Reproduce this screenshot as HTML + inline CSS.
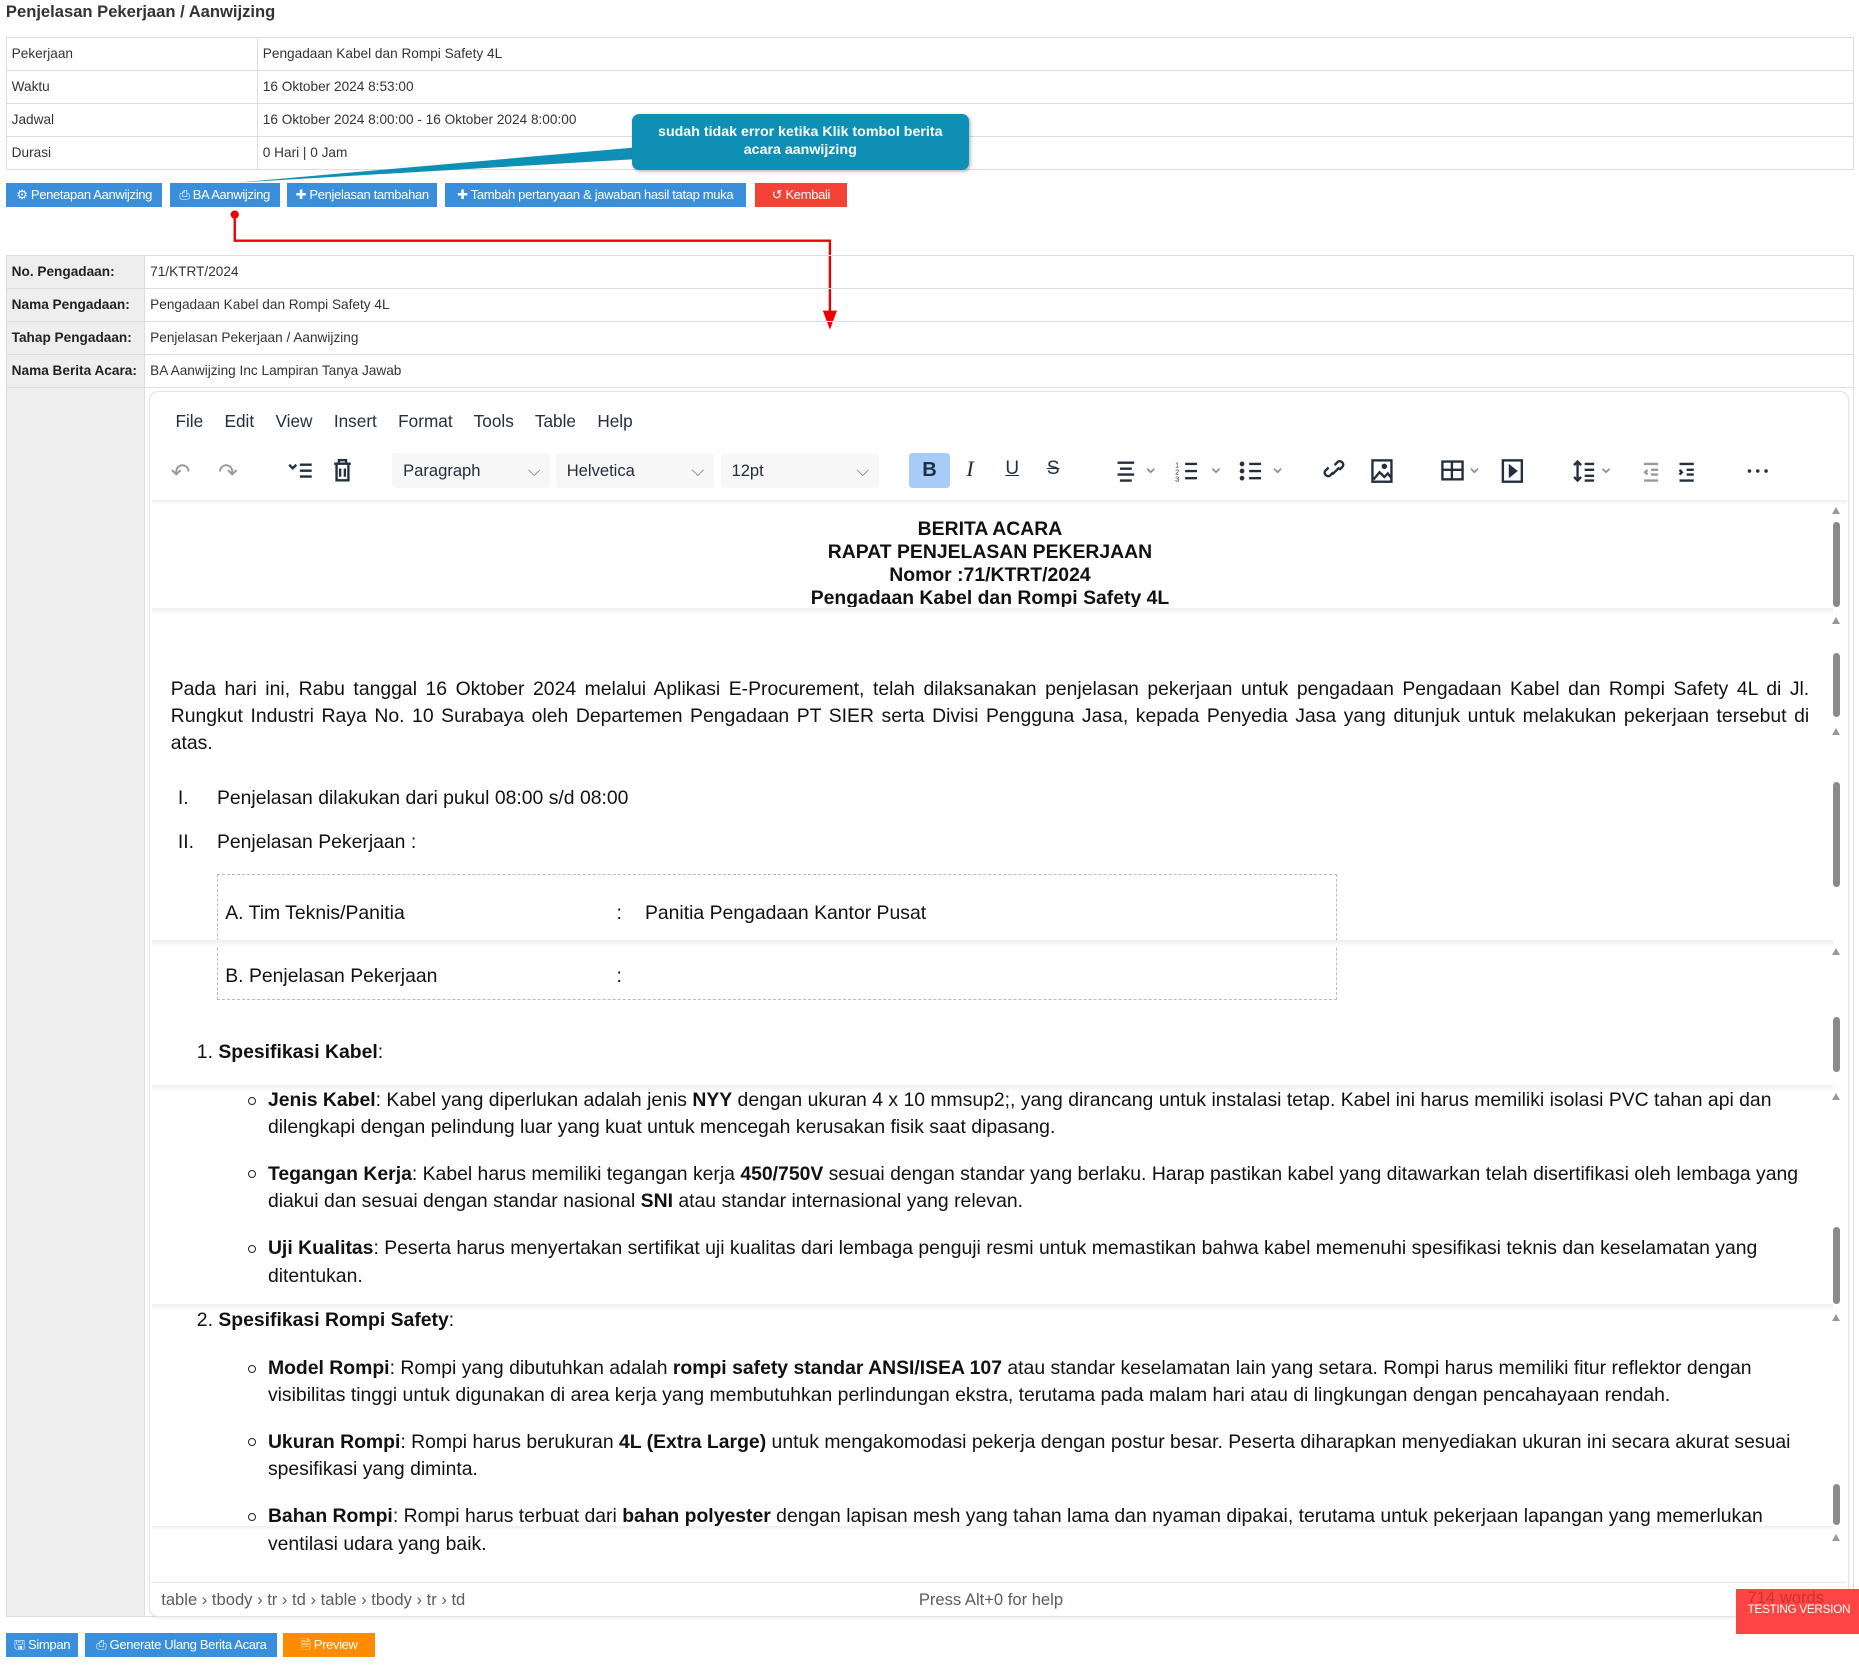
<!DOCTYPE html>
<html><head><meta charset="utf-8">
<style>
html,body{margin:0;padding:0;background:#fff;}
body{zoom:1.18559;width:1568px;height:1405px;position:relative;overflow:hidden;font-family:"Liberation Sans",Arial,sans-serif;color:#333;}
.a{position:absolute;}
table.info{position:absolute;border-collapse:collapse;font-size:11.5px;color:#333;}
table.info td{border:1px solid #ddd;padding:0 4px;height:27px;vertical-align:middle;}
.btn{position:absolute;top:154px;height:21px;color:#fff;font-size:11px;letter-spacing:-0.3px;line-height:21px;text-align:center;background:#3a8fdd;white-space:nowrap;overflow:hidden;}
.ed{font-family:"Liberation Sans",Arial,sans-serif;color:#111;font-size:16.35px;}
.ed .l{position:absolute;white-space:nowrap;}
.sh{position:absolute;left:128px;width:1418px;height:6px;background:linear-gradient(#eee,#fff);}
.sb{position:absolute;left:1546px;width:6px;background:#8a8a8a;border-radius:3px;}
.up{position:absolute;left:1545px;width:0;height:0;border-left:4px solid transparent;border-right:4px solid transparent;border-bottom:6px solid #999;}
.bul{position:absolute;width:5px;height:5px;border:1px solid #222;border-radius:50%;}
.icon{stroke:#222f3e;fill:none;stroke-width:2;}
.jl{text-align:justify;text-align-last:justify;white-space:nowrap;height:23px;}
</style></head><body>

<div class="a" style="left:5px;top:2px;font-size:14px;font-weight:bold;color:#333;">Penjelasan Pekerjaan / Aanwijzing</div>

<table class="info" style="left:5px;top:31px;width:1559px;">
<tr><td style="width:203px">Pekerjaan</td><td>Pengadaan Kabel dan Rompi Safety 4L</td></tr>
<tr><td>Waktu</td><td>16 Oktober 2024 8:53:00</td></tr>
<tr><td>Jadwal</td><td>16 Oktober 2024 8:00:00 - 16 Oktober 2024 8:00:00</td></tr>
<tr><td>Durasi</td><td>0 Hari | 0 Jam</td></tr>
</table>

<svg class="a" style="left:0;top:0" width="900" height="300">
<polygon points="540,124 540,134 200,154" fill="#0e8fb5"/>
<circle cx="198" cy="181" r="3.5" fill="#e00"/>
<polyline points="198,181 198,203 700,203 700,270" stroke="#e00" stroke-width="2" fill="none"/>
<polygon points="694,262 706,262 700,278" fill="#e00"/>
</svg>
<div class="a" style="left:533px;top:96px;width:284px;height:47px;background:#0e8fb5;border-radius:6px;box-shadow:1px 1px 3px rgba(0,0,0,.3);color:#fff;font-weight:bold;font-size:12px;text-align:center;line-height:15px;padding-top:9px;box-sizing:border-box;">sudah tidak error ketika Klik tombol berita<br>acara aanwijzing</div>

<div class="btn" style="left:5px;width:132px;">⚙ Penetapan Aanwijzing</div>
<div class="btn" style="left:143px;width:93px;">⎙ BA Aanwijzing</div>
<div class="btn" style="left:242px;width:127px;">✚ Penjelasan tambahan</div>
<div class="btn" style="left:375px;width:254px;">✚ Tambah pertanyaan &amp; jawaban hasil tatap muka</div>
<div class="btn" style="left:637px;width:77px;background:#f44336;">↺ Kembali</div>

<table class="info" style="left:5px;top:215px;width:1559px;">
<tr><td style="width:108px;background:#eee;font-weight:bold;font-size:11.5px;color:#222">No. Pengadaan:</td><td>71/KTRT/2024</td></tr>
<tr><td style="background:#eee;font-weight:bold;font-size:11.5px;color:#222">Nama Pengadaan:</td><td>Pengadaan Kabel dan Rompi Safety 4L</td></tr>
<tr><td style="background:#eee;font-weight:bold;font-size:11.5px;color:#222">Tahap Pengadaan:</td><td>Penjelasan Pekerjaan / Aanwijzing</td></tr>
<tr><td style="background:#eee;font-weight:bold;font-size:11.5px;color:#222">Nama Berita Acara:</td><td>BA Aanwijzing Inc Lampiran Tanya Jawab</td></tr>
<tr><td style="background:#eee;height:1036px"></td><td></td></tr>
</table>

<div class="a" style="left:126px;top:330px;width:1432px;height:1032px;border:1px solid #e3e3e3;border-radius:8px;background:#fff;box-shadow:0 1px 3px rgba(0,0,0,.08);"></div>
<div class="a" style="left:148px;top:347px;font-size:14.5px;color:#222f3e;word-spacing:14px;">File Edit View Insert Format Tools Table Help</div>
<div class="a" style="left:128px;top:422px;width:1430px;height:4px;background:linear-gradient(#eee,#fff);"></div>

<div class="a" style="left:144px;top:386px;font-size:20px;color:#999;">↶</div>
<div class="a" style="left:184px;top:386px;font-size:20px;color:#999;">↷</div>
<svg class="a" style="left:243px;top:388px" width="22" height="18"><path class="icon" d="M1 4l3 3 3-3M10 4h10M10 9h10M10 14h10"/></svg>
<svg class="a" style="left:281px;top:387px" width="16" height="20"><path class="icon" d="M1 4h14M5 4V1h6v3M3 4v14h10V4M6 8v7M10 8v7"/></svg>
<div class="a" style="left:331px;top:382px;width:133px;height:30px;background:#f7f7f7;border-radius:3px;font-size:14px;color:#222f3e;line-height:30px;padding-left:9px;box-sizing:border-box;">Paragraph<span style="position:absolute;right:8px;color:#777">⌵</span></div>
<div class="a" style="left:469px;top:382px;width:133px;height:30px;background:#f7f7f7;border-radius:3px;font-size:14px;color:#222f3e;line-height:30px;padding-left:9px;box-sizing:border-box;">Helvetica<span style="position:absolute;right:8px;color:#777">⌵</span></div>
<div class="a" style="left:608px;top:382px;width:133px;height:30px;background:#f7f7f7;border-radius:3px;font-size:14px;color:#222f3e;line-height:30px;padding-left:9px;box-sizing:border-box;">12pt<span style="position:absolute;right:8px;color:#777">⌵</span></div>
<div class="a" style="left:767px;top:382px;width:34px;height:30px;background:#a6ccf7;border-radius:3px;font-size:17px;font-weight:bold;color:#222f3e;text-align:center;line-height:30px;">B</div>
<div class="a" style="left:815px;top:385px;font-size:19px;font-style:italic;font-family:'Liberation Serif',serif;color:#222f3e;">I</div>
<div class="a" style="left:848px;top:386px;font-size:16px;text-decoration:underline;color:#222f3e;">U</div>
<div class="a" style="left:883px;top:386px;font-size:16px;text-decoration:line-through;color:#222f3e;">S</div>
<svg class="a" style="left:940px;top:386px" width="720" height="22">
<g class="icon" stroke-width="2">
<path d="M3 4h14M5 9h10M3 14h14M5 19h10"/><path d="M28 9l3 3 3-3" stroke="#888" stroke-width="1.3"/>
<path d="M60 5h10M60 11h10M60 17h10"/><path d="M83 9l3 3 3-3" stroke="#888" stroke-width="1.3"/>
<path d="M114 5h10M114 11h10M114 17h10"/><circle cx="108" cy="5" r="1" fill="#222f3e"/><circle cx="108" cy="11" r="1" fill="#222f3e"/><circle cx="108" cy="17" r="1" fill="#222f3e"/><path d="M135 9l3 3 3-3" stroke="#888" stroke-width="1.3"/>
<path d="M185 12l-3 3a3 3 0 0 1-4-4l3-3M190 10l3-3a3 3 0 0 0-4-4l-3 3M184 14l6-6"/>
<rect x="218" y="2" width="16" height="18"/><path d="M219 18l5-6 4 4 3-3 3 4"/><circle cx="228" cy="7" r="1.3" fill="#222f3e"/>
<rect x="277" y="3" width="17" height="15"/><path d="M277 10h17M285 3v15"/><path d="M301 9l3 3 3-3" stroke="#888" stroke-width="1.3"/>
<rect x="328" y="2" width="16" height="18"/><path d="M334 7v8l5-4z" fill="#222f3e"/>
<path d="M391 3v16M388 6l3-3 3 3M388 16l3 3 3-3M397 5h8M397 10h8M397 15h8M397 19h8"/><path d="M412 9l3 3 3-3" stroke="#888" stroke-width="1.3"/>
<path d="M447 5h12M453 10h6M453 14h6M447 19h12M450 10l-2 2 2 2" stroke="#999"/>
<path d="M477 5h12M483 10h6M483 14h6M477 19h12M477 10l2 2-2 2"/>
<circle cx="536" cy="11" r="1.5" fill="#222f3e" stroke="none"/><circle cx="543" cy="11" r="1.5" fill="#222f3e" stroke="none"/><circle cx="550" cy="11" r="1.5" fill="#222f3e" stroke="none"/>
</g>
<text x="52" y="8" font-size="6" fill="#222f3e" font-family="Liberation Sans">1</text><text x="52" y="14" font-size="6" fill="#222f3e" font-family="Liberation Sans">2</text><text x="52" y="20" font-size="6" fill="#222f3e" font-family="Liberation Sans">3</text>
</svg>
<div class="a" style="left:990px;top:388px;width:9px;height:18px;background:#fff;"></div>
<svg class="a" style="left:990px;top:386px" width="12" height="22"><text x="1" y="8" font-size="6" fill="#222f3e" font-family="Liberation Sans">1</text><text x="1" y="14" font-size="6" fill="#222f3e" font-family="Liberation Sans">2</text><text x="1" y="20" font-size="6" fill="#222f3e" font-family="Liberation Sans">3</text></svg>

<div class="ed">
<div class="l" style="left:0;width:1670px;text-align:center;top:437px;font-weight:bold;line-height:19.5px;">BERITA ACARA<br>RAPAT PENJELASAN PEKERJAAN<br>Nomor :71/KTRT/2024<br>Pengadaan Kabel dan Rompi Safety 4L</div>
<div class="a" style="left:128px;top:512px;width:1430px;height:60px;background:#fff;"></div>
<div class="sh" style="top:513px"></div>

<div class="a" style="left:144px;top:570px;width:1382px;line-height:23px;">
<div class="jl">Pada hari ini, Rabu tanggal 16 Oktober 2024 melalui Aplikasi E-Procurement, telah dilaksanakan penjelasan pekerjaan untuk pengadaan Pengadaan Kabel dan Rompi Safety 4L di Jl.</div>
<div class="jl">Rungkut Industri Raya No. 10 Surabaya oleh Departemen Pengadaan PT SIER serta Divisi Pengguna Jasa, kepada Penyedia Jasa yang ditunjuk untuk melakukan pekerjaan tersebut di</div>
<div>atas.</div>
</div>

<div class="l" style="left:150px;top:664px;">I.</div><div class="l" style="left:183px;top:664px;">Penjelasan dilakukan dari pukul 08:00 s/d 08:00</div>
<div class="l" style="left:150px;top:701px;">II.</div><div class="l" style="left:183px;top:701px;">Penjelasan Pekerjaan :</div>

<div class="a" style="left:183px;top:737px;width:943px;height:105px;border:1px dashed #bbb;"></div>
<div class="sh" style="top:793px"></div>
<div class="l" style="left:190px;top:761px;">A. Tim Teknis/Panitia</div><div class="l" style="left:520px;top:761px;">:</div><div class="l" style="left:544px;top:761px;">Panitia Pengadaan Kantor Pusat</div>
<div class="l" style="left:190px;top:814px;">B. Penjelasan Pekerjaan</div><div class="l" style="left:520px;top:814px;">:</div>

<div class="l" style="left:166px;top:878px;">1. <b>Spesifikasi Kabel</b>:</div>
<div class="sh" style="top:915px"></div>

<div class="bul" style="left:209px;top:925px"></div>
<div class="a" style="left:226px;top:917px;width:1300px;line-height:23px;"><b>Jenis Kabel</b>: Kabel yang diperlukan adalah jenis <b>NYY</b> dengan ukuran 4 x 10 mmsup2;, yang dirancang untuk instalasi tetap. Kabel ini harus memiliki isolasi PVC tahan api dan dilengkapi dengan pelindung luar yang kuat untuk mencegah kerusakan fisik saat dipasang.</div>
<div class="bul" style="left:209px;top:987px"></div>
<div class="a" style="left:226px;top:979px;width:1300px;line-height:23px;"><b>Tegangan Kerja</b>: Kabel harus memiliki tegangan kerja <b>450/750V</b> sesuai dengan standar yang berlaku. Harap pastikan kabel yang ditawarkan telah disertifikasi oleh lembaga yang diakui dan sesuai dengan standar nasional <b>SNI</b> atau standar internasional yang relevan.</div>
<div class="bul" style="left:209px;top:1050px"></div>
<div class="a" style="left:226px;top:1042px;width:1300px;line-height:23px;"><b>Uji Kualitas</b>: Peserta harus menyertakan sertifikat uji kualitas dari lembaga penguji resmi untuk memastikan bahwa kabel memenuhi spesifikasi teknis dan keselamatan yang ditentukan.</div>
<div class="sh" style="top:1100px"></div>

<div class="l" style="left:166px;top:1104px;">2. <b>Spesifikasi Rompi Safety</b>:</div>
<div class="bul" style="left:209px;top:1151px"></div>
<div class="a" style="left:226px;top:1143px;width:1300px;line-height:23px;"><b>Model Rompi</b>: Rompi yang dibutuhkan adalah <b>rompi safety standar ANSI/ISEA 107</b> atau standar keselamatan lain yang setara. Rompi harus memiliki fitur reflektor dengan<br>visibilitas tinggi untuk digunakan di area kerja yang membutuhkan perlindungan ekstra, terutama pada malam hari atau di lingkungan dengan pencahayaan rendah.</div>
<div class="bul" style="left:209px;top:1213px"></div>
<div class="a" style="left:226px;top:1205px;width:1300px;line-height:23px;"><b>Ukuran Rompi</b>: Rompi harus berukuran <b>4L (Extra Large)</b> untuk mengakomodasi pekerja dengan postur besar. Peserta diharapkan menyediakan ukuran ini secara akurat sesuai spesifikasi yang diminta.</div>
<div class="bul" style="left:209px;top:1276px"></div>
<div class="a" style="left:226px;top:1268px;width:1300px;line-height:23px;"><b>Bahan Rompi</b>: Rompi harus terbuat dari <b>bahan polyester</b> dengan lapisan mesh yang tahan lama dan nyaman dipakai, terutama untuk pekerjaan lapangan yang memerlukan<br>ventilasi udara yang baik.</div>
<div class="sh" style="top:1287px;height:4px"></div>
</div>

<div class="up" style="top:428px"></div><div class="sb" style="top:440px;height:72px"></div>
<div class="up" style="top:520px"></div><div class="sb" style="top:551px;height:54px"></div>
<div class="up" style="top:614px"></div><div class="sb" style="top:660px;height:88px"></div>
<div class="up" style="top:800px"></div><div class="sb" style="top:858px;height:46px"></div>
<div class="up" style="top:922px"></div><div class="sb" style="top:1035px;height:65px"></div>
<div class="up" style="top:1108px"></div><div class="sb" style="top:1252px;height:34px"></div>
<div class="up" style="top:1294px"></div>

<div class="a" style="left:127px;top:1334px;width:1430px;height:1px;background:#e3e3e3;"></div>
<div class="a" style="left:136px;top:1341px;font-size:14px;color:#555d66;">table › tbody › tr › td › table › tbody › tr › td</div>
<div class="a" style="left:775px;top:1341px;font-size:14px;color:#555d66;">Press Alt+0 for help</div>
<div class="a" style="left:1464px;top:1340px;width:104px;height:38px;background:#ff4444;"></div>
<div class="a" style="left:1474px;top:1339px;font-size:14px;color:#c33;">714 words</div>
<div class="a" style="left:1474px;top:1351px;font-size:10px;letter-spacing:-0.3px;color:#fff;white-space:nowrap;">TESTING VERSION</div>

<div class="btn" style="top:1377px;left:5px;width:61px;">🖫 Simpan</div>
<div class="btn" style="top:1377px;left:72px;width:162px;">⎙ Generate Ulang Berita Acara</div>
<div class="btn" style="top:1377px;left:239px;width:77px;background:#ff8c00;">🗎 Preview</div>

</body></html>
